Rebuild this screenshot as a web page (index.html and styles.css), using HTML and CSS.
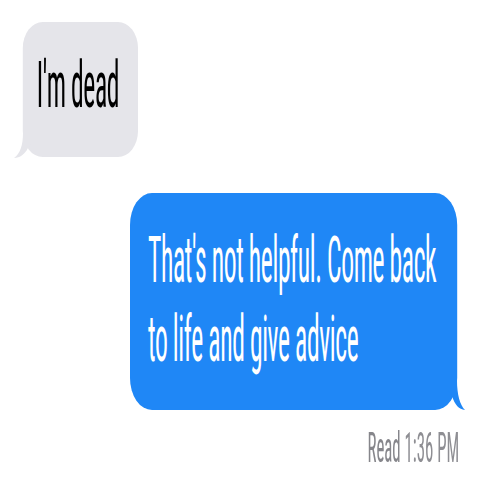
FILE: index.html
```html
<!DOCTYPE html>
<html lang="en">
<head>
<meta charset="utf-8">
<title>Messages</title>
<link rel="stylesheet" href="styles.css">
</head>
<body>
<div class="screen">
  <div class="stage">
    <div class="bubble bubble-in">
      <p class="msg">I'm dead</p>
      <svg class="tail tail-in" viewBox="0 0 30 36" preserveAspectRatio="none"><path d="M22 0 L13 0 L13 8 C13 20 10 29 4 33 C10 33 15 29 18 23 L22 18 Z"/></svg>
    </div>
    <div class="bubble bubble-out">
      <p class="msg">That's not helpful. Come back to life and give advice</p>
      <svg class="tail tail-out" viewBox="0 0 40 42" preserveAspectRatio="none"><path d="M20 0 L29 0 L29 10 C29 25 32 35 37 40 C31 39.5 27 35 24 26 L20 20 Z"/></svg>
    </div>
    <div class="status"><span class="read">Read</span> 1:36 PM</div>
  </div>
</div>
</body>
</html>
```
FILE: styles.css
```css
html, body {
  margin: 0;
  padding: 0;
  background: #ffffff;
  overflow: hidden;
}
.screen {
  width: 480px;
  height: 480px;
  overflow: hidden;
}
.stage {
  width: 1200px;
  padding-top: 22px;
  display: flex;
  flex-direction: column;
  transform: scaleX(0.4);
  transform-origin: 0 0;
  font-family: "Roboto Condensed", "Liberation Sans", Arial, sans-serif;
}
.bubble {
  position: relative;
  box-sizing: border-box;
}
.msg {
  margin: 0;
  font-size: 64px;
  font-weight: 430;
  line-height: 79px;
  letter-spacing: -1px;
}
.bubble-in {
  align-self: flex-start;
  margin-left: 57px;
  width: 288px;
  padding: 24px 20px 32px 35px;
  background: #e5e5ea;
  color: #000;
  border-radius: 50px / 26px;
}
.bubble-out {
  align-self: flex-end;
  margin-right: 57px;
  margin-top: 36px;
  width: 818px;
  padding: 28px 30px 31px 45px;
  background: #1f87f6;
  color: #fff;
  border-radius: 55px / 32px;
}
.tail {
  position: absolute;
  display: block;
}
.tail-in {
  left: -32px;
  top: 103px;
  width: 75px;
  height: 36px;
  fill: #e5e5ea;
}
.tail-out {
  right: -27px;
  top: 177px;
  width: 100px;
  height: 42px;
  fill: #1f87f6;
}
.status {
  align-self: flex-end;
  margin-right: 52px;
  margin-top: 13px;
  font-size: 42px;
  line-height: 50px;
  color: #8e8e93;
}
.read {
  color: #86868b;
}
```
